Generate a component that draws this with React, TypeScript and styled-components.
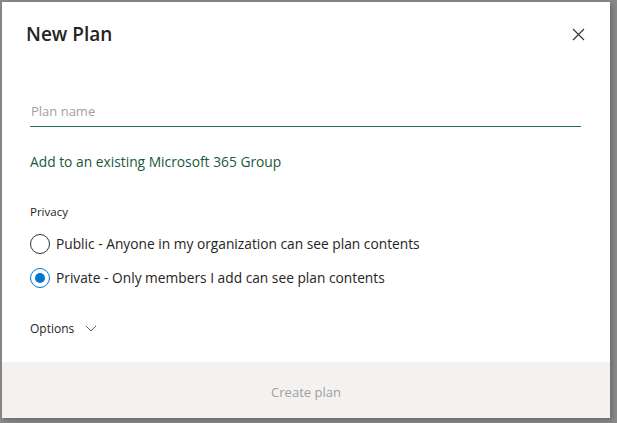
import React from "react";
import styled, { createGlobalStyle } from "styled-components";

const Global = createGlobalStyle`
  html, body { margin: 0; padding: 0; }
  body {
    background: #8a8a8a;
    font-family: "Open Sans", "Noto Sans", "Liberation Sans", sans-serif;
    width: 617px;
    height: 423px;
    overflow: hidden;
  }
`;

const Backdrop = styled.div`
  width: 617px;
  height: 423px;
  padding: 2px 7px 5px 2px;
  box-sizing: border-box;
`;

const Dialog = styled.div`
  width: 608px;
  height: 416px;
  background: #ffffff;
  display: flex;
  flex-direction: column;
  box-shadow: 2px 2px 6px rgba(0, 0, 0, 0.25);
`;

const Header = styled.div`
  display: flex;
  align-items: flex-start;
  justify-content: space-between;
  padding: 18px 25px 0 24px;
  height: 44px;
  box-sizing: border-box;
`;

const Title = styled.h1`
  margin: 0;
  font-size: 19px;
  font-weight: 600;
  color: #252423;
  line-height: 28px;
`;

const CloseButton = styled.button`
  border: none;
  background: transparent;
  padding: 0;
  margin-top: 7px;
  width: 14px;
  height: 14px;
  display: flex;
  align-items: center;
  justify-content: center;
  cursor: pointer;
`;

const Body = styled.div`
  flex: 1;
  display: flex;
  flex-direction: column;
  padding: 56px 29px 0 28px;
`;

const NameInput = styled.input`
  border: none;
  border-bottom: 1px solid #217346;
  outline: none;
  font-family: inherit;
  font-size: 13px;
  padding: 0 0 6px 1px;
  height: 25px;
  box-sizing: border-box;
  color: #252423;
  &::placeholder { color: #a19f9d; }
`;

const LinkButton = styled.button`
  border: none;
  background: transparent;
  padding: 0;
  margin-top: 25px;
  align-self: flex-start;
  font-family: inherit;
  font-size: 13.8px;
  color: #185a3a;
  cursor: pointer;
  line-height: 20px;
`;

const Label = styled.div`
  margin-top: 32px;
  font-size: 11.5px;
  color: #252423;
  line-height: 16px;
`;

const RadioGroup = styled.div`
  display: flex;
  flex-direction: column;
  gap: 14px;
  margin-top: 14px;
`;

const RadioRow = styled.label`
  display: flex;
  align-items: center;
  gap: 6px;
  font-size: 13.75px;
  color: #252423;
  line-height: 20px;
  cursor: pointer;
`;

const RadioCircle = styled.span<{ $checked?: boolean }>`
  width: 20px;
  height: 20px;
  border-radius: 50%;
  border: 1px solid ${(p) => (p.$checked ? "#0078d4" : "#323130")};
  box-sizing: border-box;
  display: flex;
  align-items: center;
  justify-content: center;
  flex-shrink: 0;
  &::after {
    content: "";
    width: 10px;
    height: 10px;
    border-radius: 50%;
    background: ${(p) => (p.$checked ? "#0078d4" : "transparent")};
  }
`;

const OptionsToggle = styled.button`
  margin-top: 32px;
  align-self: flex-start;
  border: none;
  background: transparent;
  padding: 0;
  display: flex;
  align-items: center;
  gap: 11px;
  font-family: inherit;
  font-size: 12px;
  color: #252423;
  cursor: pointer;
`;

const Footer = styled.div`
  height: 56px;
  background: #f3f2f1;
  display: flex;
  align-items: center;
  justify-content: center;
  padding-top: 3px;
  box-sizing: border-box;
`;

const CreateButton = styled.button`
  border: none;
  background: transparent;
  font-family: inherit;
  font-size: 13px;
  color: #a19f9d;
  padding: 0;
`;

export default function App() {
  return (
    <Backdrop>
      <Global />
      <Dialog>
        <Header>
          <Title>New Plan</Title>
          <CloseButton aria-label="Close">
            <svg width="13" height="13" viewBox="0 0 13 13">
              <path d="M1 1 L12 12 M12 1 L1 12" stroke="#323130" strokeWidth="1.1" />
            </svg>
          </CloseButton>
        </Header>
        <Body>
          <NameInput placeholder="Plan name" />
          <LinkButton>Add to an existing Microsoft 365 Group</LinkButton>
          <Label>Privacy</Label>
          <RadioGroup>
            <RadioRow>
              <RadioCircle />
              Public - Anyone in my organization can see plan contents
            </RadioRow>
            <RadioRow>
              <RadioCircle $checked />
              Private - Only members I add can see plan contents
            </RadioRow>
          </RadioGroup>
          <OptionsToggle>
            Options
            <svg width="12" height="8" viewBox="0 0 12 8">
              <path d="M1 1 L6 6 L11 1" fill="none" stroke="#605e5c" strokeWidth="1" />
            </svg>
          </OptionsToggle>
        </Body>
        <Footer>
          <CreateButton disabled>Create plan</CreateButton>
        </Footer>
      </Dialog>
    </Backdrop>
  );
}
